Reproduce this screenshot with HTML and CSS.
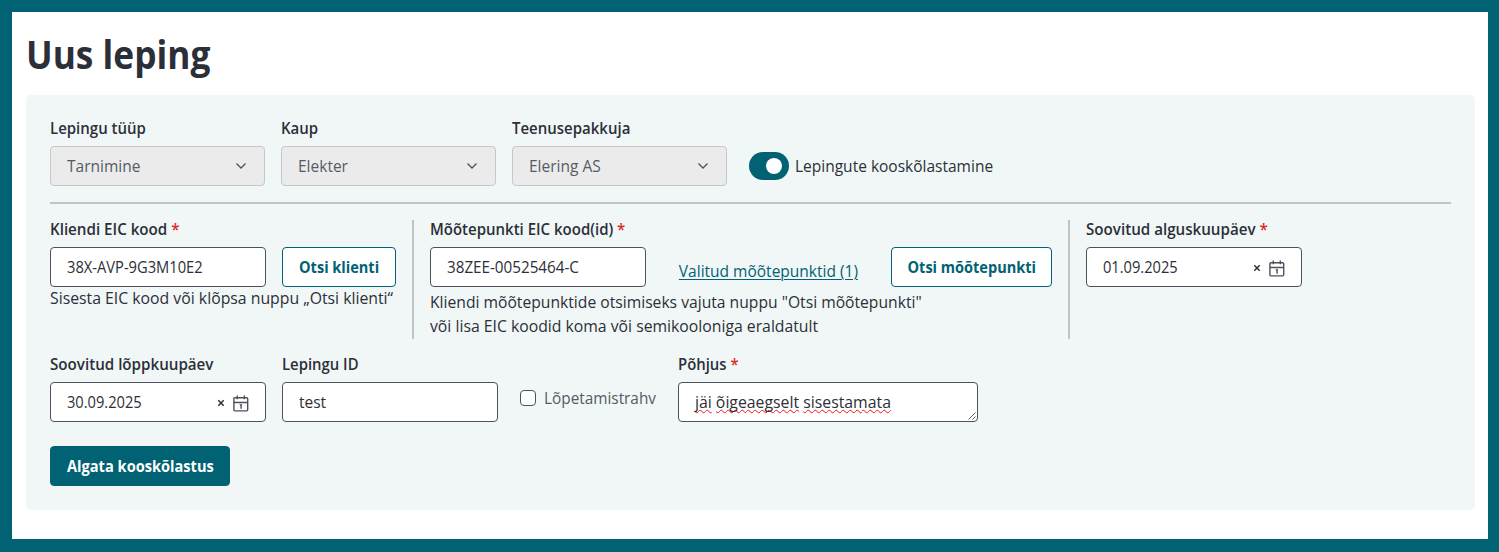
FILE: index.html
```html
<!DOCTYPE html>
<html lang="et">
<head>
<meta charset="utf-8">
<title>Uus leping</title>
<link rel="stylesheet" href="styles.css">
</head>
<body>
<svg width="0" height="0" class="defs">
  <symbol id="chevron" viewBox="0 0 12 8"><path d="M1.500 1.500 6 6l4.500-4.500" fill="none" stroke="currentColor" stroke-width="1.300"/></symbol>
  <symbol id="calendar" viewBox="0 0 16 17"><path d="M2 2.700h11.600q1.100 0 1.100 1.100v11q0 1.100-1.100 1.100H2q-1.100 0-1.100-1.100v-11q0-1.100 1.100-1.100zM.9 7.500h13.800M4.300.5v3.800M11.300.5v3.800" fill="none" stroke="currentColor" stroke-width="1.400"/><path d="M6.800 10.200l1.300-.5v4" fill="none" stroke="currentColor" stroke-width="1.400"/></symbol>
</svg>
<main class="page">
  <h1 class="title"><span class="t">Uus leping</span></h1>
  <form class="panel">
    <div class="row top">
      <div class="field"><label class="label"><span class="t">Lepingu tüüp</span></label><div class="select"><span class="t">Tarnimine</span><svg class="chevron"><use href="#chevron"/></svg></div></div>
      <div class="field"><label class="label"><span class="t">Kaup</span></label><div class="select"><span class="t">Elekter</span><svg class="chevron"><use href="#chevron"/></svg></div></div>
      <div class="field"><label class="label"><span class="t">Teenusepakkuja</span></label><div class="select"><span class="t">Elering AS</span><svg class="chevron"><use href="#chevron"/></svg></div></div>
      <div class="toggle-field"><span class="toggle"><span class="knob"></span></span><span class="t">Lepingute kooskõlastamine</span></div>
    </div>
    <div class="rule"></div>
    <div class="row middle">
      <section class="group">
        <label class="label wide"><span class="t">Kliendi EIC kood <i class="req">*</i></span></label>
        <div class="controls"><div class="input code"><span class="t">38X-AVP-9G3M10E2</span></div><div class="button otsi-klienti"><span class="t">Otsi klienti</span></div></div>
        <div class="hint client-hint"><span class="t">Sisesta EIC kood või klõpsa nuppu „Otsi klienti“</span></div>
      </section>
      <div class="divider"></div>
      <section class="group points">
        <label class="label"><span class="t">Mõõtepunkti EIC kood(id) <i class="req">*</i></span></label>
        <div class="controls spread"><div class="input meter"><span class="t">38ZEE-00525464-C</span></div><a class="link"><span class="t">Valitud mõõtepunktid (1)</span></a><div class="button"><span class="t">Otsi mõõtepunkti</span></div></div>
        <div class="hint points-hint"><span class="t">Kliendi mõõtepunktide otsimiseks vajuta nuppu "Otsi mõõtepunkti"</span><br><span class="t second">või lisa EIC koodid koma või semikooloniga eraldatult</span></div>
      </section>
      <div class="divider"></div>
      <section class="group">
        <label class="label wide"><span class="t">Soovitud alguskuupäev <i class="req">*</i></span></label>
        <div class="input date"><span class="t">01.09.2025</span><svg class="clear" viewBox="0 0 8 8"><path d="M1.300 1.300l5.400 5.400M6.700 1.300 1.300 6.700"/></svg><svg class="calendar"><use href="#calendar"/></svg></div>
      </section>
    </div>
    <div class="row bottom">
      <div class="field"><label class="label wide"><span class="t">Soovitud lõppkuupäev</span></label><div class="input date"><span class="t">30.09.2025</span><svg class="clear" viewBox="0 0 8 8"><path d="M1.300 1.300l5.400 5.400M6.700 1.300 1.300 6.700"/></svg><svg class="calendar"><use href="#calendar"/></svg></div></div>
      <div class="field"><label class="label narrow"><span class="t">Lepingu ID</span></label><div class="input"><span class="t">test</span></div></div>
      <div class="check-field"><span class="checkbox"></span><span class="t">Lõpetamistrahv</span></div>
      <div class="field"><label class="label narrow"><span class="t">Põhjus <i class="req">*</i></span></label>
        <div class="input textarea"><span class="t"><span class="misspelt">jäi</span> <span class="misspelt">õigeaegselt</span> <span class="misspelt">sisestamata</span></span><svg class="grip" viewBox="0 0 8 8"><path d="M.5 7.500l7-7M4.500 7.500l3-3"/></svg></div>
      </div>
    </div>
    <div class="button primary"><span class="t">Algata kooskõlastus</span></div>
  </form>
</main>
</body>
</html>
```
FILE: styles.css
```css
* { box-sizing: border-box; }
body {
  --w: 0.969;
  margin: 0;
  height: 552px;
  overflow: hidden;
  background: #006272;
  padding: 12px 11px 13px 12px;
  font: 400 16px/24px "Open Sans", "Noto Sans", sans-serif;
  color: #2c2f38;
  white-space: nowrap;
}
/* Slightly condensed lettering; --w is the horizontal scale. */
.t { display: inline-block; transform: scaleX(var(--w)); transform-origin: 0 50%; }
.defs { position: absolute; }
.page { height: 527px; background: #fff; padding: 18px 13px 0 14px; }
.title { --w: 0.882; margin: 0 0 17px; font-size: 40px; line-height: 48px; font-weight: 700; }
.panel { height: 415px; padding: 21px 24px; background: #f1f7f7; border-radius: 5px; }
.row { display: flex; gap: 16px; }
.label { --w: 0.937; display: block; margin-bottom: 6px; font-weight: 600; }
.label.wide { --w: 0.947; }
.label.narrow { --w: 0.93; }
.req { font-style: normal; color: #dc2a22; }
.select, .input {
  display: flex;
  align-items: center;
  width: 216px;
  height: 40px;
  padding: 0 16px;
  border: 1px solid #4c515d;
  border-radius: 4px;
  background: #fff;
}
.select { width: 215px; justify-content: space-between; background: #ebebeb; border-color: #c4c7cd; color: #545b66; }
.chevron { width: 12px; height: 8px; margin-right: 1px; color: #4c515d; }
.toggle-field { display: flex; align-items: center; gap: 6px; height: 40px; margin: 30px 0 0 6px; }
.toggle { display: flex; align-items: center; justify-content: flex-end; width: 40px; height: 28px; padding-right: 7px; background: #006272; border-radius: 14px; }
.knob { width: 16px; height: 16px; border-radius: 50%; background: #fff; }
.rule { height: 2px; margin: 16px 0 13px; background: #bfc5c6; }
.middle { height: 122px; }
.divider { width: 2px; height: 119px; margin-top: 3px; background: #bfc5c6; }
.controls { display: flex; gap: 16px; }
.points { width: 622px; }
.spread { justify-content: space-between; }
.code { --w: 0.918; }
.meter { --w: 0.95; }
.date { --w: 0.915; justify-content: flex-end; }
.date .t { margin-right: auto; }
.clear { width: 8px; height: 8px; margin: 2px 8px 0 0; fill: none; stroke: #2c2f38; stroke-width: 1.500; }
.calendar { width: 16px; height: 17px; margin-top: 2px; color: #4c515d; }
.button {
  --w: 0.908;
  display: flex;
  align-items: center;
  justify-content: center;
  width: 161px;
  height: 40px;
  border: 1px solid #006272;
  border-radius: 4px;
  background: #fff;
  color: #006272;
  font-weight: 700;
}
.button .t, .link .t { transform-origin: 50% 50%; }
.otsi-klienti { width: 114px; }
.link { align-self: flex-end; height: 24px; margin-bottom: 4px; color: #006272; }
.link .t { text-decoration: underline 1px; text-underline-offset: 2px; }
.client-hint { --w: 0.987; width: 346px; margin-top: -1px; }
.points-hint { --w: 0.979; margin-top: 3px; }
.second { --w: 0.985; }
.bottom { margin-top: 13px; }
.check-field { --w: 0.959; display: flex; align-items: center; gap: 8px; height: 24px; width: 142px; margin: 34px 0 0 6px; color: #545b66; }
.checkbox { flex: none; width: 16px; height: 16px; border: 1px solid #4c515d; border-radius: 4px; background: #fff; }
.textarea { --w: 0.988; width: 300px; position: relative; }
.misspelt { text-decoration: underline wavy #f0141e 1px; text-underline-offset: 1px; text-decoration-skip-ink: none; }
.grip { position: absolute; right: 1px; bottom: 1px; width: 8px; height: 8px; fill: none; stroke: #4c515d; stroke-width: 0.9; }
.primary { --w: 0.913; width: 180px; margin-top: 24px; background: #006272; color: #fff; }
```
